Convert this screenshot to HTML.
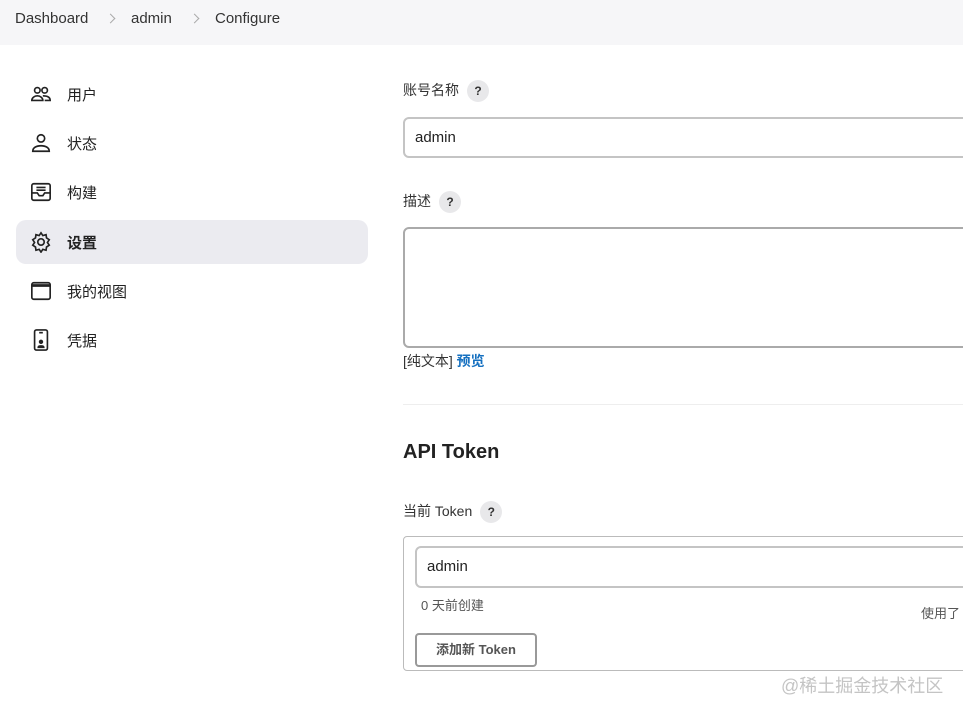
<!DOCTYPE html>
<html><head><meta charset="utf-8"><style>
body{margin:0;width:963px;height:714px;overflow:hidden;background:#fff;font-family:"Liberation Sans","Noto Sans CJK SC",sans-serif;color:#222;position:relative}
.top{position:absolute;left:0;top:0;width:963px;height:45px;background:#f6f6f8}
.bc{position:absolute;top:10px;font-size:15px;color:#333}
.sep{position:absolute;top:11px;width:6px;height:6px;border-top:1.5px solid #aaa;border-right:1.5px solid #aaa;transform:translateY(4px) rotate(45deg)}
.item{position:absolute;left:16px;width:352px;height:44px;border-radius:10px}
.item svg{position:absolute;left:14px;top:11px}
.item span{position:absolute;left:51px;top:12px;font-size:15px}
.lbl{position:absolute;left:403px;font-size:14px;color:#333}
.q{display:inline-block;width:22px;height:22px;border-radius:50%;background:#e8e8ea;text-align:center;line-height:22px;font-size:12px;font-weight:bold;margin-left:8px;vertical-align:middle}
.inp{position:absolute;border:2px solid #c4c4c4;border-radius:6px;background:#fff;box-sizing:border-box;font-size:15px}
</style></head><body>
<div class="top"></div>
<div class="bc" style="left:15px">Dashboard</div><div class="sep" style="left:107px"></div>
<div class="bc" style="left:131px">admin</div><div class="sep" style="left:191px"></div>
<div class="bc" style="left:215px">Configure</div>

<div class="item" style="top:72px"><svg width="22" height="22" viewBox="0 0 24 24" fill="none" stroke="#222" stroke-width="1.8"><circle cx="8" cy="8" r="3"/><circle cx="16" cy="8" r="3"/><path d="M2 19c0-3 3-5 6-5s6 2 6 5zM14 14c4 0 8 1 8 5h-6"/></svg><span>用户</span></div>
<div class="item" style="top:121px"><svg width="22" height="22" viewBox="0 0 24 24" fill="none" stroke="#222" stroke-width="1.8"><circle cx="12" cy="7" r="4"/><path d="M3 21c0-4 4-6 9-6s9 2 9 6z"/></svg><span>状态</span></div>
<div class="item" style="top:170px"><svg width="22" height="22" viewBox="0 0 24 24" fill="none" stroke="#222" stroke-width="1.8"><rect x="2" y="3" width="20" height="18" rx="2"/><path d="M2 13h6l2 3h4l2-3h6M7 7h10M7 10h10"/></svg><span>构建</span></div>
<div class="item" style="top:220px;background:#ebebf0"><svg width="22" height="22" viewBox="0 0 24 24" fill="none" stroke="#222" stroke-width="1.8"><circle cx="12" cy="12" r="3.5"/><path d="M12 2l2 3 3.5-1 .5 3.5 3 2-2 3 2 3-3 2-.5 3.5-3.5-1-2 3-2-3-3.5 1-.5-3.5-3-2 2-3-2-3 3-2 .5-3.5 3.5 1z"/></svg><span style="font-weight:bold">设置</span></div>
<div class="item" style="top:269px"><svg width="22" height="22" viewBox="0 0 24 24" fill="none" stroke="#222" stroke-width="1.8"><rect x="2" y="3" width="20" height="18" rx="2"/><path d="M2 6h20" stroke-width="3"/></svg><span>我的视图</span></div>
<div class="item" style="top:318px"><svg width="22" height="22" viewBox="0 0 24 24" fill="none" stroke="#222" stroke-width="1.8"><rect x="5" y="1" width="14" height="22" rx="2"/><path d="M10 4h4"/><circle cx="12" cy="14" r="1.5" fill="#222"/><path d="M9 20c0-2 6-2 6 0z" fill="#222"/></svg><span>凭据</span></div>

<div class="lbl" style="top:80px">账号名称<span class="q">?</span></div>
<div class="inp" style="left:403px;top:117px;width:580px;height:41px;padding:10px 10px">admin</div>
<div class="lbl" style="top:191px">描述<span class="q">?</span></div>
<div class="inp" style="left:403px;top:227px;width:580px;height:121px;border-color:#aaa"></div>
<div class="lbl" style="top:351px">[纯文本] <b style="color:#1570c0">预览</b></div>
<div style="position:absolute;left:403px;top:404px;width:560px;height:1px;background:#eee"></div>
<div style="position:absolute;left:403px;top:441px;font-size:20px;font-weight:bold">API Token</div>
<div class="lbl" style="top:501px">当前 Token<span class="q">?</span></div>
<div style="position:absolute;left:403px;top:536px;width:580px;height:135px;border:1px solid #bbb;border-radius:4px;box-sizing:border-box"></div>
<div class="inp" style="left:415px;top:546px;width:580px;height:42px;padding:10px 10px">admin</div>
<div style="position:absolute;left:421px;top:595px;font-size:13px;color:#555">0 天前创建</div>
<div style="position:absolute;left:921px;top:603px;font-size:13px;color:#555">使用了</div>
<div style="position:absolute;left:415px;top:633px;width:122px;height:34px;border:2px solid #999;border-radius:4px;box-sizing:border-box;text-align:center;line-height:30px;font-size:13px;font-weight:bold;color:#555">添加新 Token</div>
<div style="position:absolute;left:781px;top:672px;font-size:18px;color:#c4c4c4">@稀土掘金技术社区</div>
</body></html>
